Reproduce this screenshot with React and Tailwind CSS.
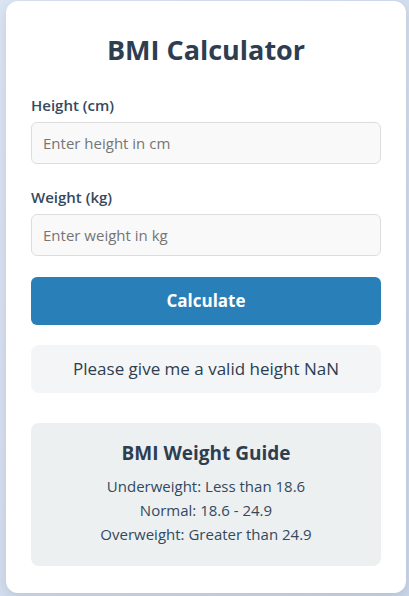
export default function App() {
  return (
    <div
      className="min-h-screen bg-gradient-to-br from-[#dbe4f3] to-[#c9d6ea] pl-[6px] pt-px"
      style={{ fontFamily: '"Open Sans", "Noto Sans", sans-serif' }}
    >
      <div className="w-[400px] rounded-[12px] bg-white px-[25px] pb-[27px] pt-[30px] shadow-[0_4px_12px_rgba(0,0,0,0.1)]">
        <h1 className="text-center text-[27px] font-bold leading-[38px] text-[#2c3e50]">BMI Calculator</h1>

        <div className="mt-[25px]">
          <label className="block text-[15px] font-semibold leading-[22px] text-[#34495e]">Height (cm)</label>
          <input
            className="mt-[6px] h-[42px] w-full rounded-[6px] border border-[#dddddd] bg-[#f9f9f9] px-[11px] text-[15px] text-[#333] outline-none placeholder:text-[#757575]"
            placeholder="Enter height in cm"
          />
        </div>

        <div className="mt-[22px]">
          <label className="block text-[15px] font-semibold leading-[22px] text-[#34495e]">Weight (kg)</label>
          <input
            className="mt-[6px] h-[42px] w-full rounded-[6px] border border-[#dddddd] bg-[#f9f9f9] px-[11px] text-[15px] text-[#333] outline-none placeholder:text-[#757575]"
            placeholder="Enter weight in kg"
          />
        </div>

        <button className="mt-[21px] h-[48px] w-full rounded-[6px] bg-[#2980b9] text-[17px] font-bold text-white">
          Calculate
        </button>

        <div className="mt-[20px] flex h-[48px] items-center justify-center rounded-[8px] bg-[#f4f5f7] text-[17px] text-[#2c3e50]">
          Please give me a valid height NaN
        </div>

        <div className="mt-[30px] rounded-[8px] bg-[#ecf0f1] px-4 pb-[20px] pt-[17px] text-center text-[#2c3e50]">
          <h2 className="text-[19px] font-bold leading-[26px]">BMI Weight Guide</h2>
          <div className="mt-[8px] text-[15px] leading-[24px] text-[#34495e]">
            <p>Underweight: Less than 18.6</p>
            <p>Normal: 18.6 - 24.9</p>
            <p>Overweight: Greater than 24.9</p>
          </div>
        </div>
      </div>
    </div>
  );
}
